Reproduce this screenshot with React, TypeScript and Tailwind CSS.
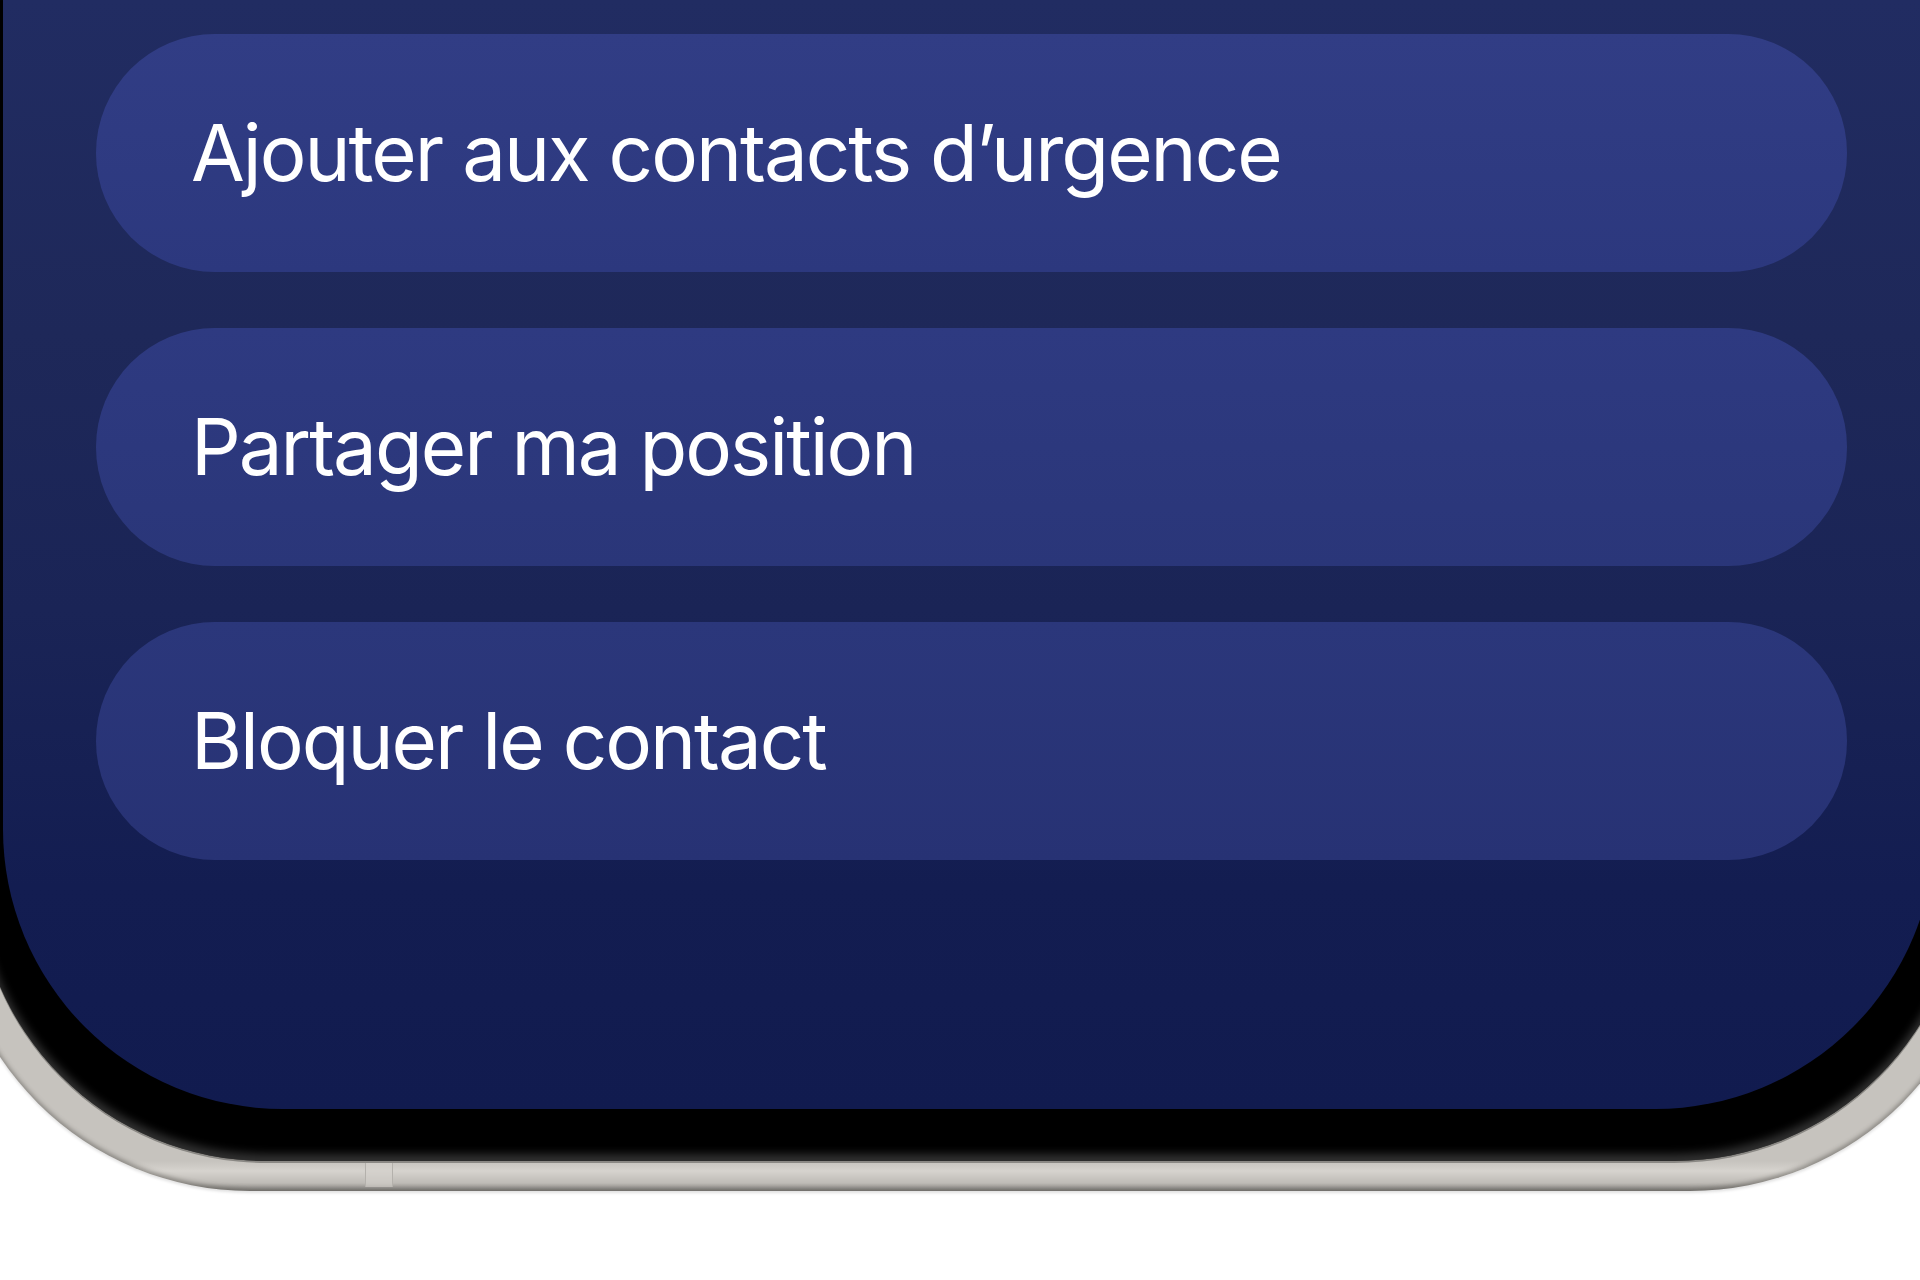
const actions = [
  { label: "Ajouter aux contacts d’urgence", tone: "from-[#313d85] to-[#2c387e]" },
  { label: "Partager ma position", tone: "from-[#2e3a81] to-[#2a3679]" },
  { label: "Bloquer le contact", tone: "from-[#2b377b] to-[#273274]" },
]

export default function App() {
  return (
    <div className="h-screen w-full overflow-hidden bg-white">
      {/* titanium frame */}
      <div className="relative -ml-[50px] -mr-[70px] rounded-b-[300px] bg-[linear-gradient(to_bottom,#c6c3be_calc(100%-30px),#d6d3ce_calc(100%-20px),#bebbb6_calc(100%-8px),#8f8d89_100%)] px-[26px] pb-[30px] shadow-[inset_0_-3px_4px_rgba(70,68,64,0.45),0_2px_3px_rgba(0,0,0,0.12)]">
        <div className="pointer-events-none absolute bottom-[4px] left-[415px] h-[24px] w-[28px] border-x border-[#b4b1ac] bg-[#d3d0cb]/60" />
        {/* black bezel */}
        <div className="rounded-b-[290px] bg-black pb-[52px] pl-[27px] pr-[29px] shadow-[inset_0_-7px_9px_rgba(80,80,80,0.6),0_2px_0_#8a8884]">
          {/* screen */}
          <div
            className="flex flex-col gap-[56px] rounded-b-[280px] bg-[linear-gradient(to_bottom,#212c62_0%,#1e2859_30%,#1a2456_55%,#131d51_80%,#111b4f_100%)] pb-[249px] pl-[93px] pr-[88px] pt-[34px]"
            style={{ fontFamily: "Inter, 'Noto Sans', sans-serif" }}
          >
            {actions.map((a) => (
              <button
                key={a.label}
                className={`flex h-[238px] w-full items-center rounded-full bg-gradient-to-b ${a.tone} px-[95px] text-left`}
              >
                <span className="text-[78px] font-normal leading-none tracking-[-2px] text-white">
                  {a.label}
                </span>
              </button>
            ))}
          </div>
        </div>
      </div>
    </div>
  )
}
